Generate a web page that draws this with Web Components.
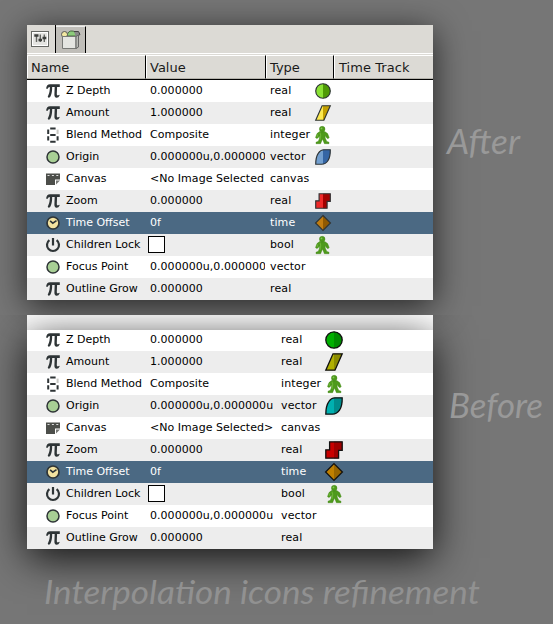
<!DOCTYPE html>
<html lang="en"><head><meta charset="utf-8"><title>Interpolation icons refinement</title>
<style>html,body{margin:0;width:553px;height:624px;overflow:hidden;background:#747474}</style></head>
<body><icon-comparison></icon-comparison>
<script>
const pi='<path d="M.1 4.6Q.6 .3 4 .3H13.8V3H4.2Q2 3 1.4 4.9Z" fill="#2e3436"/><path d="M4 2.5H6.2Q6.2 9 4.6 12.3Q3.8 14 2.3 13.6Q1.2 12.8 2.2 11.4Q3.8 8.8 4 2.5ZM8.7 2.5H11.1L10.8 10.3Q11 12.2 13.2 10.8L13.7 11.3Q12.6 13.9 10.5 13.8Q8.3 13.5 8.4 10.6Z" fill="#2e3436"/>';
const dot='<circle cx="7" cy="7" r="6" fill="#a8cf95" stroke="#2e3436" stroke-width="1.5"/>';
const NAME_ICONS={pi,dot,
 digit:'<g fill="none" stroke="#2e3436" stroke-width="2"><path d="M4.2 .4h5.4M4.2 7h5.4M4.2 13.8h5.4M2.2 1.6V6M2.2 8.2V12.6M11.6 8.2V12.6"/><path d="M11.6 1.6V6" stroke="#c8c8c4"/></g>',
 canvas:'<path d="M0 1.5H14V7.5H9V13H0Z" fill="#4c4e4a"/><path d="M1.5 3.5H13" stroke="#ddd" stroke-width="1.2" stroke-dasharray="2 2.4"/><path d="M10 12.5V8.5H14Z" fill="#777975"/>',
 clock:'<circle cx="7" cy="7" r="6" fill="#f3e2a0" stroke="#2e3436" stroke-width="1.7"/><path d="M4.1 4.8L6.8 7.2L10.5 4.6" fill="none" stroke="#2e3436" stroke-width="1.6"/>',
 power:'<path d="M3.4 2.2A6 6 0 1 0 10.6 2.2" fill="none" stroke="#2e3436" stroke-width="2.2"/><path d="M7 0V7.5" stroke="#2e3436" stroke-width="2.2"/>'};
const split=(d,a,b,s)=>`<defs><clipPath id="r"><path d="M9 0H18V18H9Z"/></clipPath></defs><path d="${d}" fill="${a}"/><path d="${d}" fill="${b}" clip-path="url(#r)"/><path d="${d}" fill="none" stroke="${s}" stroke-width="1.3"/>`;
const SHAPES={circle:'M9 .8A8.2 8.2 0 1 1 9 17.2A8.2 8.2 0 1 1 9 .8Z',slant:'M8 .8H17.2L10 17.2H.8Z',leaf:'M17.2 .8Q17.4 9 14.5 13.2Q12 17 7.5 17.2H.8Q.8 9 3.8 4.6Q6.2 .8 10 .8Z',step:'M4.6 .8H17.2V9.4H13.6V17.2H.8V8.8H4.6Z',diamond:'M9 .6L17.4 9L9 17.4L.6 9Z'};
const COLORS={after:{circle:['#8ae234','#4e9a06'],slant:['#fce94f','#c4a000'],leaf:['#729fcf','#3465a4'],step:['#ef2929','#a40000'],diamond:['#c17d11','#8f5902']},
 before:{circle:['#00b000','#008c00'],slant:['#b0b000','#8c8c00'],leaf:['#00b0b0','#008c8c'],step:['#c80000','#a00000'],diamond:['#c08000','#996600']}};
const man='<g fill="#4e9a1c" stroke="#3c8010" stroke-width=".4"><path d="M4.6 5.6H9.8L12.6 7.6L14.2 11.6L13 12.8L11.6 11.8L10.3 9.6L10.2 12L11.8 15.4L14 16.2V17.7H9.4L7.5 13L5.6 17.7H1V16.2L3.4 15.3L4.5 12V9.7L3.2 11.8L1.8 12.6L.5 11.6L2 7.6Z"/><circle cx="7.2" cy="3.1" r="2.8"/></g><path d="M5 6.6L5.7 9.6L5 14M2.8 8.4L2 11" fill="none" stroke="#6cb536" stroke-width="1.1"/><circle cx="6.5" cy="2.4" r=".9" fill="#83c750"/>';

customElements.define('name-icon',class extends HTMLElement{connectedCallback(){
 this.attachShadow({mode:'open'}).innerHTML=`<style>:host{display:block;width:15px;height:15px}svg{display:block;overflow:visible}</style><svg width="14" height="14" viewBox="0 0 14 14">${NAME_ICONS[this.getAttribute('kind')]}</svg>`}});

customElements.define('waypoint-icon',class extends HTMLElement{connectedCallback(){
 const k=this.getAttribute('kind'),t=this.getAttribute('theme'),s=t==='after'?16:18;
 const body=k==='man'?`<svg width="15" height="18" viewBox="0 0 15 18">${man}</svg>`:`<svg width="${s}" height="${s}" viewBox="0 0 18 18">${split(SHAPES[k],...COLORS[t][k],t==='after'?'#2e3436':'#111')}</svg>`;
 this.attachShadow({mode:'open'}).innerHTML=`<style>:host{display:flex;width:18px;height:22px;align-items:center;justify-content:${t==='after'?'flex-start':'center'}}svg{display:block;overflow:visible}</style>${body}`}});

customElements.define('param-row',class extends HTMLElement{connectedCallback(){
 const g=n=>this.getAttribute(n)||'',t=g('theme'),esc=s=>s.replace(/</g,'&lt;').replace(/>/g,'&gt;');
 this.attachShadow({mode:'open'}).innerHTML=`<style>
 :host{display:grid;grid-template-columns:19px 20px 82px ${t==='after'?'117px 5px 45px':'128px 5px 44px'} 1fr;height:22px;font:11px/22px "DejaVu Sans",sans-serif;color:#000;background:var(--row,#fff);white-space:pre;overflow:hidden}
 :host([selected]){background:#4b6983;color:#fff}
 name-icon{margin-top:4px}.v{overflow:hidden;padding-left:2px;letter-spacing:.04px}.t{letter-spacing:.12px}
 i{display:block;box-sizing:border-box;width:17px;height:17px;margin:2px 0 0 -2px;border:1px solid #000;background:#fff}
 .v:has(i){overflow:visible}</style>
 <span></span><name-icon kind="${g('icon')}"></name-icon><span class="name">${g('label')}</span><span class="v">${g('value')==='check'?'<i></i>':esc(g('value'))}</span><span></span><span class="t">${g('type')}</span>${g('mark')?`<waypoint-icon kind="${g('mark')}" theme="${t}"></waypoint-icon>`:''}`}});

const ROWS=[['pi','Z Depth','0.000000','real','circle'],['pi','Amount','1.000000','real','slant'],['digit','Blend Method','Composite','integer','man'],['dot','Origin','0.000000u,0.000000u','vector','leaf'],['canvas','Canvas','<No Image Selected>','canvas',''],['pi','Zoom','0.000000','real','step'],['clock','Time Offset','0f','time','diamond'],['power','Children Lock','check','bool','man'],['dot','Focus Point','0.000000u,0.000000u','vector',''],['pi','Outline Grow','0.000000','real','']];

customElements.define('param-list',class extends HTMLElement{connectedCallback(){
 const t=this.getAttribute('theme');
 this.attachShadow({mode:'open'}).innerHTML=`<style>:host{display:flex;flex-direction:column;justify-content:flex-end;overflow:hidden}param-row{flex:none}param-row:nth-of-type(even){--row:#ededed}</style>`+
 ROWS.map(([i,l,v,y,m],n)=>`<param-row theme="${t}" icon="${i}" label="${l}" value="${t==='after'?v.replace(/u$|>$/,''):v}" type="${y}" mark="${m}" ${n===6?'selected':''}></param-row>`).join('')}});

customElements.define('panel-header',class extends HTMLElement{connectedCallback(){
 this.attachShadow({mode:'open'}).innerHTML=`<style>:host{display:block;height:55px;background:#dcdad5;color:#1a1a1a;font:13px/24px "DejaVu Sans",sans-serif}
 .tabs{display:flex;height:28px}.a{width:28px;border-right:1px solid #000}.b{box-sizing:border-box;width:30px;height:27px;margin-top:1px;background:#c0beb9;border-right:1px solid #000;border-top:1px solid #eee}
 svg{display:block}.cols{box-sizing:border-box;display:grid;grid-template-columns:119px 120px 68px 1fr;height:27px;border-top:1px solid #fff;border-bottom:1px solid #000;padding-top:1px;background:#dcdad5}
 .cols span{height:24px;box-sizing:border-box;padding-left:4px;border-top:1px solid #fff;border-bottom:1px solid #b5b3ac;border-right:1px solid #000;line-height:24px;box-shadow:inset 1px 0 #fff}.cols span:last-child{border-right:0;padding-left:5px;letter-spacing:.05px}</style>
 <div class="tabs"><div class="a"><svg width="28" height="28"><rect x="4.5" y="6.5" width="17" height="15" fill="#e4e4e1" stroke="#666864"/><rect x="5.5" y="7.5" width="15" height="13" fill="none" stroke="#fff"/><path d="M9.5 10V17M13.3 9.5V17M17.3 9.5V17" stroke="#666864" stroke-width="1.4"/><path d="M7.3 10.5H11.5M11.5 15H15M15.5 13H19.3" stroke="#3b3d3b" stroke-width="2.6"/></svg></div>
 <div class="b"><svg width="29" height="26"><path d="M11 9Q12 3.5 16 4Q20 4 21 9Z" fill="#8ccb7b" stroke="#4b6b43"/><circle cx="8.5" cy="7.5" r="3" fill="#f1e7a0" stroke="#555"/><path d="M18 4.5L22.5 4.5L24 7.5L20 10" fill="#888" stroke="#444"/><path d="M6.5 9.5H20V21.5H6.5Z" fill="#e4e5e1" stroke="#777975"/><path d="M20 9.5L22.5 8V20L20 21.5Z" fill="#b6b8b3" stroke="#666"/></svg></div></div>
 <div class="cols"><span>Name</span><span>Value</span><span>Type</span><span>Time Track</span></div>`}});

customElements.define('hand-caption',class extends HTMLElement{connectedCallback(){
 const g=n=>this.getAttribute(n);
 this.attachShadow({mode:'open'}).innerHTML=`<style>:host{display:block}svg{display:block;overflow:visible}text{font:italic 400 ${g('size')}px "Lato",sans-serif;fill:${g('tone')}}</style><svg width="${g('w')}" height="44"><text x="0" y="33" textLength="${g('w')}" lengthAdjust="spacingAndGlyphs">${this.textContent}</text></svg>`}});

customElements.define('icon-comparison',class extends HTMLElement{connectedCallback(){
 this.attachShadow({mode:'open'}).innerHTML=`<style>:host{box-sizing:border-box;display:grid;width:553px;height:624px;padding-top:25px;grid-template:275px 15px 234px 1fr / 27px 406px 120px;background:#767676}
 .p{grid-column:2;position:relative}.one{grid-row:1;box-shadow:0 6px 32px rgba(0,0,0,.7);z-index:1}.two{grid-row:3;background:#fff;z-index:2}
 .two::before{content:"";position:absolute;inset:15px 0 0;box-shadow:0 9px 38px rgba(0,0,0,.85);clip-path:inset(-15px -80px -80px -80px)}
 .two param-list{height:219px;margin-top:15px;position:relative}
 hand-caption{z-index:3}.a{grid-area:1/3;margin:96px 0 0 14px}.b{grid-area:3/3;margin:70px 0 0 16px}.c{grid-area:4/1/5/4;margin:22px 0 0 44px}</style>
 <section class="p one"><panel-header></panel-header><param-list theme="after"></param-list></section>
 <hand-caption class="a" size="35" w="73" tone="#999">After</hand-caption>
 <section class="p two"><param-list theme="before"></param-list></section>
 <hand-caption class="b" size="35" w="94" tone="#999">Before</hand-caption>
 <hand-caption class="c" size="32" w="436" tone="#919191">Interpolation icons refinement</hand-caption>`}});
</script></body></html>
